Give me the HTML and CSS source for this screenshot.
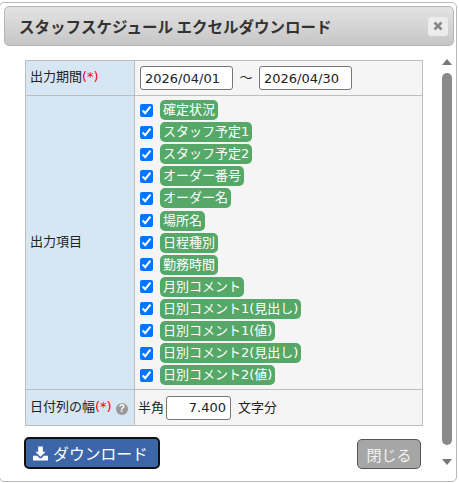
FILE: index.html
```html
<!DOCTYPE html>
<html lang="ja">
<head>
<meta charset="utf-8">
<title>スタッフスケジュール エクセルダウンロード</title>
<link rel="stylesheet" href="styles.css">
</head>
<body>
<div class="dialog">
  <header class="titlebar">
    <span class="title">スタッフスケジュール エクセルダウンロード</span>
    <span class="close"><svg width="10" height="10" viewBox="0 0 10 10"><path d="M1.5 1.5l7 7M8.5 1.5l-7 7" stroke="#888" stroke-width="2.6" fill="none"/></svg></span>
  </header>
  <div class="body">
    <div class="content">
      <table class="form">
        <tr class="row-period">
          <th>出力期間<span class="req">(*)</span></th>
          <td><div class="dates"><input class="date" value="2026/04/01"><span>～</span><input class="date" value="2026/04/30"></div></td>
        </tr>
        <tr>
          <th>出力項目</th>
          <td class="items">
            <label class="item"><input type="checkbox" checked><span class="tag">確定状況</span></label>
            <label class="item"><input type="checkbox" checked><span class="tag">スタッフ予定1</span></label>
            <label class="item"><input type="checkbox" checked><span class="tag">スタッフ予定2</span></label>
            <label class="item"><input type="checkbox" checked><span class="tag">オーダー番号</span></label>
            <label class="item"><input type="checkbox" checked><span class="tag">オーダー名</span></label>
            <label class="item"><input type="checkbox" checked><span class="tag">場所名</span></label>
            <label class="item"><input type="checkbox" checked><span class="tag">日程種別</span></label>
            <label class="item"><input type="checkbox" checked><span class="tag">勤務時間</span></label>
            <label class="item"><input type="checkbox" checked><span class="tag">月別コメント</span></label>
            <label class="item"><input type="checkbox" checked><span class="tag">日別コメント1(見出し)</span></label>
            <label class="item"><input type="checkbox" checked><span class="tag">日別コメント1(値)</span></label>
            <label class="item"><input type="checkbox" checked><span class="tag">日別コメント2(見出し)</span></label>
            <label class="item"><input type="checkbox" checked><span class="tag">日別コメント2(値)</span></label>
          </td>
        </tr>
        <tr class="row-width">
          <th>日付列の幅<span class="req">(*)</span> <span class="help">?</span></th>
          <td><div class="widths"><span>半角</span><input class="num" value="7.400"><span>文字分</span></div></td>
        </tr>
      </table>
      <div class="actions">
        <button class="btn-dl" type="button"><svg width="15" height="15" viewBox="0 0 16 15"><path d="M5.500 0h5v5.500h3L8 11 2.500 5.500h3z" fill="#fff"/><path d="M0 10h4.500L7 12.500h2L11.500 10H16v5H0z" fill="#fff"/></svg>ダウンロード</button>
        <button class="btn-close" type="button">閉じる</button>
      </div>
    </div>
    <div class="scrollbar">
      <span class="arrow up"></span>
      <span class="thumb"></span>
      <span class="arrow down"></span>
    </div>
  </div>
</div>
</body>
</html>
```
FILE: styles.css
```css
* { box-sizing: border-box; }
html, body { margin: 0; padding: 0; background: #fff; }
body {
  width: 459px; height: 483px; overflow: hidden;
  font-family: "DejaVu Sans", "Noto Sans CJK JP", sans-serif;
  font-size: 13px; color: #222;
}
.dialog {
  width: 458px; height: 480px; margin-top: 2px; margin-left: -1px;
  border: 1px solid #b9b9b9; border-radius: 5px; background: #fff;
  padding: 3px 2px 0 4px;
}
.titlebar {
  height: 40px; display: flex; align-items: center; justify-content: space-between;
  padding: 0 5px 0 14px;
  border: 1px solid #b5b5b5; border-radius: 5px;
  background: linear-gradient(#e3e3e3, #c6c6c6);
}
.title { font-family: "Noto Sans CJK JP", sans-serif; font-size: 15.500px; font-weight: 700; color: #333; white-space: nowrap; }
.close {
  width: 20px; height: 19px; border-radius: 3px; background: #ececec;
  display: flex; align-items: center; justify-content: center;
}
.body { display: flex; }
.content { width: 419px; padding: 14px 0 0 21px; flex: none; }
.form { width: 398px; border-collapse: collapse; background: #f5f5f5; }
.form th, .form td { border: 1px solid #bdbdbd; padding: 0; }
.form th {
  width: 109px; background: #d6e6f3; font-weight: 400; text-align: left;
  padding: 0 0 2px 4px; white-space: nowrap; font-size: 13px; line-height: 18px;
}
.form td { padding-left: 5px; }
.row-period { height: 35px; }
.row-width { height: 36px; }
.req { color: #f00; }
.help {
  display: inline-block; width: 12px; height: 12px; border-radius: 50%;
  background: #999; color: #fff; font-size: 10px; line-height: 12px; font-weight: 700;
  text-align: center; vertical-align: -1px;
  font-family: "Liberation Sans", sans-serif;
}
.dates, .widths { display: flex; align-items: center; line-height: 18px; }
.dates { gap: 6.500px; }
.widths { gap: 2px; margin-left: -2px; }
.widths .num { margin-right: 5px; }
.date, .num {
  height: 24px; border: 1px solid #767676; border-radius: 3px; padding: 0 4px; background: #fff;
  font-family: "DejaVu Sans", sans-serif; font-size: 13px; color: #222; outline: none;
}
.date { width: 93px; }
.num { width: 65px; text-align: right; padding-right: 4px; }
.form .items { padding-top: 3px; padding-bottom: 3px; padding-left: 5px; }
.item { display: flex; align-items: center; height: 22.100px; }
.item input {
  width: 13px; height: 13px; margin: 0 7px 0 0; accent-color: #0075ff; flex: none;
}
.tag {
  background: #55a868; color: #fff; border-radius: 5px; padding: 0 3px;
  height: 20px; line-height: 19px; white-space: nowrap; font-size: 13px;
}
.actions { display: flex; justify-content: space-between; align-items: flex-start; padding-top: 11px; width: 397px; margin-left: -1px; }
.btn-dl {
  width: 136px; height: 32px; border: 2px solid #111; border-radius: 5px; background: #3c66a8;
  color: #fff; font-family: "Noto Sans CJK JP", sans-serif; font-size: 15.800px; display: flex; align-items: center; justify-content: center; gap: 5px; padding: 0 3px 0 0;
}
.btn-close {
  width: 64px; height: 30px; border: 1px solid #555; border-radius: 5px; background: #a6a6a6;
  color: #f2f2f2; font-family: "Noto Sans CJK JP", sans-serif; font-size: 15px; padding: 0; margin-top: 2px;
}
.scrollbar {
  width: 12px; height: 420px; margin: 13px 0 0 18px; display: flex; flex-direction: column; align-items: center;
}
.arrow { width: 0; height: 0; border-left: 5px solid transparent; border-right: 5px solid transparent; flex: none; }
.up { border-bottom: 6px solid #777; }
.down { border-top: 6px solid #777; margin-top: 14px; }
.thumb { width: 10px; height: 372px; border-radius: 5px; background: #8a8a8a; margin-top: 8px; flex: none; }
```
